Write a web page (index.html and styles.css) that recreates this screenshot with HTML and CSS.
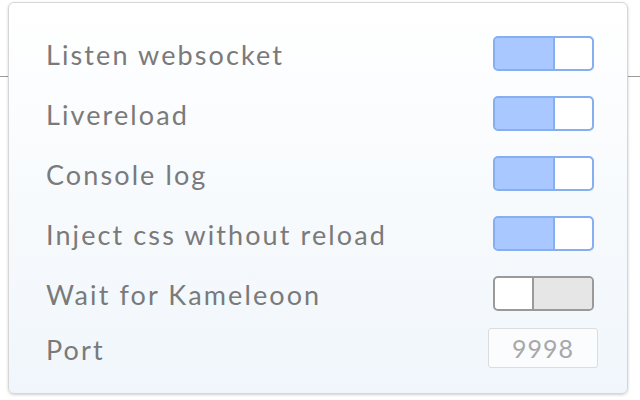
FILE: index.html
```html
<!DOCTYPE html>
<html>
<head>
<meta charset="utf-8">
<link rel="stylesheet" href="styles.css">
</head>
<body>
<div class="card">
  <div class="row"><span class="label">Listen websocket</span><span class="toggle on"><span class="fill"></span><span class="knob"></span></span></div>
  <div class="row"><span class="label">Livereload</span><span class="toggle on"><span class="fill"></span><span class="knob"></span></span></div>
  <div class="row"><span class="label">Console log</span><span class="toggle on"><span class="fill"></span><span class="knob"></span></span></div>
  <div class="row"><span class="label">Inject css without reload</span><span class="toggle on"><span class="fill"></span><span class="knob"></span></span></div>
  <div class="row"><span class="label">Wait for Kameleoon</span><span class="toggle off"><span class="knob"></span><span class="fill"></span></span></div>
  <div class="row port"><span class="label">Port</span><span class="input">9998</span></div>
</div>
</body>
</html>
```

FILE: styles.css
```css
html, body {
  margin: 0;
  padding: 0;
}
body {
  width: 640px;
  height: 400px;
  overflow: hidden;
  background: linear-gradient(to bottom, #fff 0, #fff 76px, #9a9a9a 76px, #9a9a9a 77px, #fff 77px);
  font-family: "Lato", "Open Sans", sans-serif;
}
.card {
  box-sizing: border-box;
  margin: 2px 0 0 8px;
  width: 620px;
  height: 392px;
  border: 1px solid #d6d6d6;
  border-radius: 6px;
  background: linear-gradient(to bottom, #ffffff 0%, #f0f6fb 100%);
  box-shadow: 0 1px 3px rgba(0,0,0,0.18);
  padding: 20px 33px 0 37px;
}
.row {
  height: 60px;
  display: flex;
  align-items: center;
  justify-content: space-between;
}
.row.port {
  height: 50px;
  margin-right: -4px;
}
.label {
  font-size: 27px;
  color: #7a7a7a;
  letter-spacing: 2.1px;
  padding-top: 2px;
}
.toggle {
  box-sizing: border-box;
  width: 101px;
  height: 35px;
  border-radius: 5px;
  display: flex;
  overflow: hidden;
}
.toggle.on {
  border: 2px solid #86aef0;
  background: #a8c8ff;
}
.toggle.on .fill {
  flex: 1;
  background: #a8c8ff;
  border-right: 2px solid #86aef0;
}
.toggle.on .knob {
  width: 37px;
  background: #fff;
  border-radius: 0 3px 3px 0;
}
.toggle.off {
  border: 2px solid #9a9a9a;
  background: #e6e6e6;
}
.toggle.off .knob {
  width: 37px;
  background: #fff;
  border-right: 2px solid #9a9a9a;
  border-radius: 3px 0 0 3px;
}
.toggle.off .fill {
  flex: 1;
  background: #e6e6e6;
}
.input {
  box-sizing: border-box;
  width: 110px;
  height: 40px;
  border: 1px solid #dcdcdc;
  border-radius: 3px;
  background: #fafcfe;
  color: #a8a8a8;
  font-size: 25px;
  display: flex;
  align-items: center;
  justify-content: center;
  letter-spacing: 1px;
}
```
